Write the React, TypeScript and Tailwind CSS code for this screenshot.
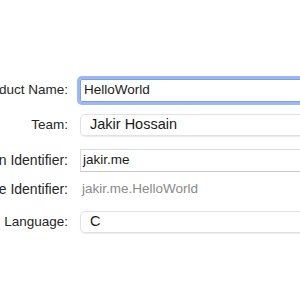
const labelCls =
  'w-[68px] shrink-0 flex justify-end whitespace-nowrap text-[#262626]'

function Row({
  label,
  children,
  className,
  labelSize = 'text-[13.5px]',
}: {
  label: string
  children: React.ReactNode
  className: string
  labelSize?: string
}) {
  return (
    <div className={`flex items-center gap-3 ${className}`}>
      <div className={`${labelCls} ${labelSize}`}>{label}</div>
      {children}
    </div>
  )
}

export default function App() {
  return (
    <div
      className="h-[300px] w-[300px] overflow-hidden bg-white"
      style={{ fontFamily: '"Liberation Sans", Arial, sans-serif' }}
    >
      <div className="w-[420px] pt-[79px]">
        <Row label="Product Name:" className="h-[23px]">
          <div className="flex h-[23px] flex-1 items-center rounded-[2px] border border-[#7d9fe6] pl-[3px] text-[13.5px] text-[#1a1a1a] shadow-[0_0_0_3px_#9bb8f1]">
            HelloWorld
          </div>
        </Row>

        <Row label="Team:" className="mt-[12px] h-[22px]">
          <div className="flex h-[22px] flex-1 items-center rounded-[5px] border border-[#e2e2e2] pl-[9px] text-[14.5px] text-[#1a1a1a] shadow-[0_1px_1px_rgba(0,0,0,0.08)]">
            Jakir Hossain
          </div>
        </Row>

        <Row label="Organization Identifier:" labelSize="text-[14px]" className="mt-[13px] h-[23px]">
          <div className="flex h-[23px] flex-1 items-center border border-[#dcdcdc] border-b-[#c8c8c8] pl-[2px] text-[13.5px] text-[#1a1a1a]">
            jakir.me
          </div>
        </Row>

        <Row label="Bundle Identifier:" labelSize="text-[14px]" className="mt-[6px] h-[22px]">
          <div className="flex-1 pl-[2px] text-[13.5px] text-[#8a8a8a]">jakir.me.HelloWorld</div>
        </Row>

        <Row label="Language:" className="mt-[11px] h-[22px]">
          <div className="flex h-[22px] flex-1 items-center rounded-[5px] border border-[#e2e2e2] pl-[9px] text-[14.5px] text-[#1a1a1a] shadow-[0_1px_1px_rgba(0,0,0,0.08)]">
            C
          </div>
        </Row>
      </div>
    </div>
  )
}
